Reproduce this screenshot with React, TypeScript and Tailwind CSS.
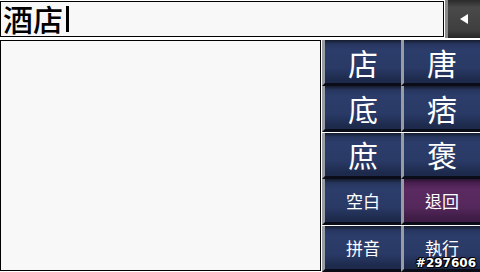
import React from "react";

const font = { fontFamily: '"Noto Sans CJK TC", "Noto Sans CJK SC", "Noto Sans", sans-serif' };

function Key({ label, big, purple }: { label: string; big?: boolean; purple?: boolean }) {
  return (
    <div
      className={
        "relative flex h-[46px] items-center justify-center border-l-[3px] border-l-[#9a9ca4] border-b-[3px] border-b-[#0a0d18] " +
        (purple
          ? "bg-[linear-gradient(to_bottom,#2a1530_0px,#4a1f52_4px,#5a2a60_10px,#55285c_28px,#3e1c45_40px)]"
          : "bg-[linear-gradient(to_bottom,#151a2c_0px,#27365f_4px,#2c3d6b_10px,#2a3a66_28px,#1d2a4c_40px)]")
      }
    >
      <span
        className={"text-white leading-none " + (big ? "text-[30px]" : "text-[17px]")}
        style={font}
      >
        {label}
      </span>
    </div>
  );
}

export default function App() {
  return (
    <div className="relative w-[480px] h-[272px] overflow-hidden bg-white flex flex-col" style={font}>
      <div className="flex h-[39px] shrink-0">
        <div className="mt-[1px] h-[36px] w-[444px] border-[1.5px] border-black bg-[#f8f8f8] flex items-center pl-[2px]">
          <span className="text-[30px] leading-[30px] font-medium text-black -mt-[2px]" style={font}>酒店</span>
          <div className="ml-[3px] h-[26px] w-[3px] bg-black" />
        </div>
        <div className="ml-[1px] h-[38px] flex-1 flex items-center justify-center border-l-[3px] border-l-[#8a8a8a] bg-[linear-gradient(to_bottom,#2a2a2a,#4a4a4a_20%,#3e3e3e_80%,#262626)]">
          <svg width="10" height="10" viewBox="0 0 10 10">
            <polygon points="9,0 9,10 1,5" fill="white" />
          </svg>
        </div>
      </div>
      <div className="flex flex-1 pt-[1px]">
        <div className="w-[321px] h-[231px] border-[1.5px] border-black bg-[#f8f8f8]" />
        <div className="ml-[1px] flex-1 grid grid-cols-2">
          <Key label="店" big />
          <Key label="唐" big />
          <Key label="底" big />
          <Key label="痞" big />
          <Key label="庶" big />
          <Key label="褒" big />
          <Key label="空白" />
          <Key label="退回" purple />
          <Key label="拼音" />
          <Key label="執行" />
        </div>
      </div>
      <div
        className="absolute right-[4px] bottom-[3px] text-[12px] leading-none text-white font-bold"
        style={{ fontFamily: '"DejaVu Sans", sans-serif', textShadow: "1px 0 0 #000, -1px 0 0 #000, 0 1px 0 #000, 0 -1px 0 #000, 1px 1px 0 #000, -1px -1px 0 #000" }}
      >
        #297606
      </div>
    </div>
  );
}
